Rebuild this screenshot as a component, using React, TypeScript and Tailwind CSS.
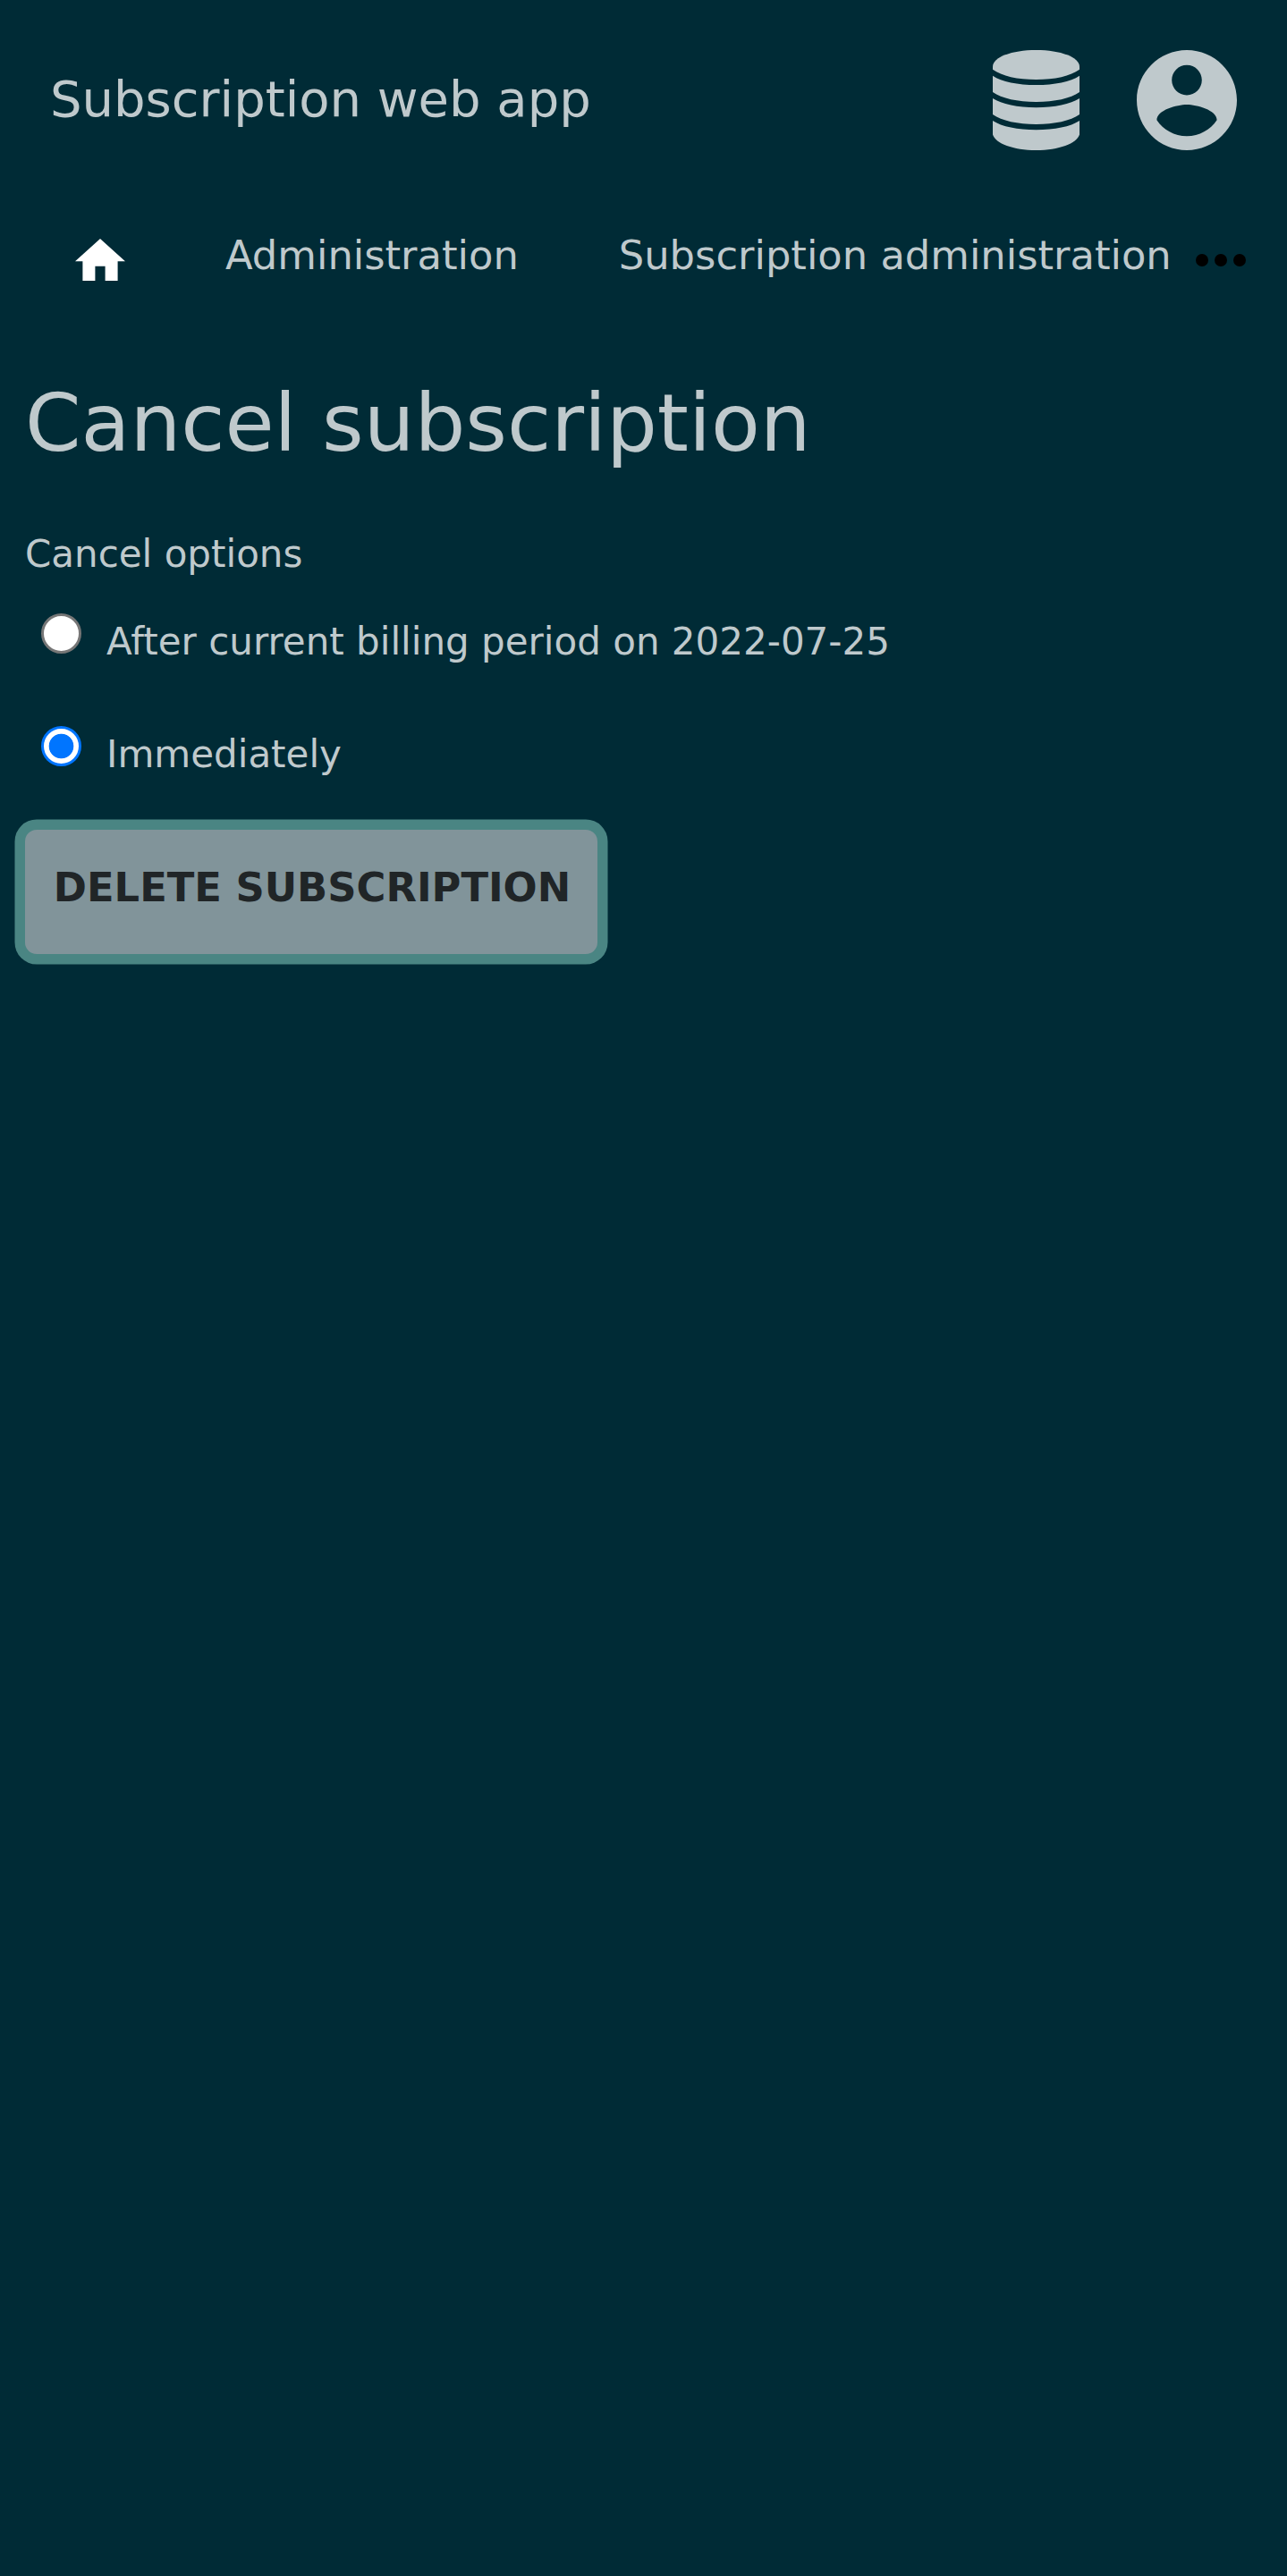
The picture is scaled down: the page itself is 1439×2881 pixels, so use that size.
import React, { useState } from "react";

function DatabaseIcon() {
  return (
    <svg className="h-[112px] w-[97px]" viewBox="0 0 97 112" fill="currentColor">
      <path d="M0 18.500C0 8 21 0 48.500 0S97 8 97 18.500V21.700C87 29 69 33 48.500 33S10 29 0 21.700Z" />
      <path d="M0 28.700C10 35.500 28 39 48.500 39S87 35.500 97 28.700V47.000C87 54 69 58 48.500 58S10 54 0 47.000Z" />
      <path d="M0 54C10 60.500 28 64.200 48.500 64.200S87 60.500 97 54V72C87 79 69 83 48.500 83S10 79 0 72Z" />
      <path d="M0 79C10 85.700 28 89.200 48.500 89.200S87 85.700 97 79V94.500C94 104.500 74 112 48.500 112S3 104.500 0 94.500Z" />
    </svg>
  );
}

function AccountIcon() {
  return (
    <svg className="size-28" viewBox="2 2 20 20" fill="currentColor">
      <path d="M12 2C6.480 2 2 6.480 2 12s4.480 10 10 10 10-4.480 10-10S17.520 2 12 2zm0 3c1.660 0 3 1.340 3 3s-1.340 3-3 3-3-1.340-3-3 1.340-3 3-3zm0 14.200c-2.500 0-4.710-1.280-6-3.220.030-1.990 4-3.080 6-3.080 1.990 0 5.970 1.090 6 3.080-1.290 1.940-3.500 3.220-6 3.220z" />
    </svg>
  );
}

function Option({
  label,
  checked,
  onSelect,
}: {
  label: string;
  checked: boolean;
  onSelect: () => void;
}) {
  return (
    <label className="flex h-[126px] items-start">
      <input
        type="radio"
        name="cancel"
        checked={checked}
        onChange={onSelect}
        className="ml-[18px] mt-[2px] size-[45px] shrink-0 appearance-none rounded-full border-[3px] border-[#767676] bg-white checked:border-[#0075ff] checked:bg-[radial-gradient(circle,#0075ff_13.4px,#ffffff_14.2px)]"
      />
      <span className="ml-7 mt-[2px] text-[42px] leading-[63px]">{label}</span>
    </label>
  );
}

export default function App() {
  const [option, setOption] = useState("now");
  return (
    <div className="min-h-[2881px] w-full overflow-hidden bg-[#002b36] font-['DejaVu_Sans',sans-serif] text-[#bfc9cc]">
      <header className="flex h-[224px] items-start justify-between px-14 pt-14">
        <span className="mt-[13px] text-[56px] leading-[83px]">Subscription web app</span>
        <div className="flex gap-16">
          <DatabaseIcon />
          <AccountIcon />
        </div>
      </header>
      <nav className="flex h-[168px] items-start whitespace-nowrap pl-[84px] pt-[28px] text-[44.8px] leading-[67px]">
        <svg className="mt-[14.7px] h-[47.6px] w-14 shrink-0 text-white" viewBox="2 3 20 17" fill="currentColor">
          <path d="M10 20v-6h4v6h5v-8h3L12 3 2 12h3v8z" />
        </svg>
        <a className="ml-28">Administration</a>
        <a className="ml-28">Subscription administration</a>
        <svg className="ml-[27px] mt-[31.500px] h-3.5 w-14 shrink-0 text-black" viewBox="0 0 16 4" fill="currentColor">
          <circle cx="2" cy="2" r="2" />
          <circle cx="8" cy="2" r="2" />
          <circle cx="14" cy="2" r="2" />
        </svg>
      </nav>
      <main className="px-7">
        <h1 className="mt-[28px] text-[89.6px] leading-[107px]">Cancel subscription</h1>
        <fieldset className="mt-[61px]">
          <legend className="text-[42px] leading-[63px]">Cancel options</legend>
          <div className="mt-[33px]">
            <Option
              label="After current billing period on 2022-07-25"
              checked={option === "later"}
              onSelect={() => setOption("later")}
            />
            <Option label="Immediately" checked={option === "now"} onSelect={() => setOption("now")} />
          </div>
        </fieldset>
        <button className="-mt-2 flex h-[139px] w-[640px] items-start justify-center whitespace-nowrap rounded-[13px] bg-[#81949a] pl-[2px] pt-[31px] text-[44.8px] font-bold leading-[67px] text-[#202527] shadow-[0_0_0_11.5px_#4a8583]">
          DELETE SUBSCRIPTION
        </button>
      </main>
    </div>
  );
}
